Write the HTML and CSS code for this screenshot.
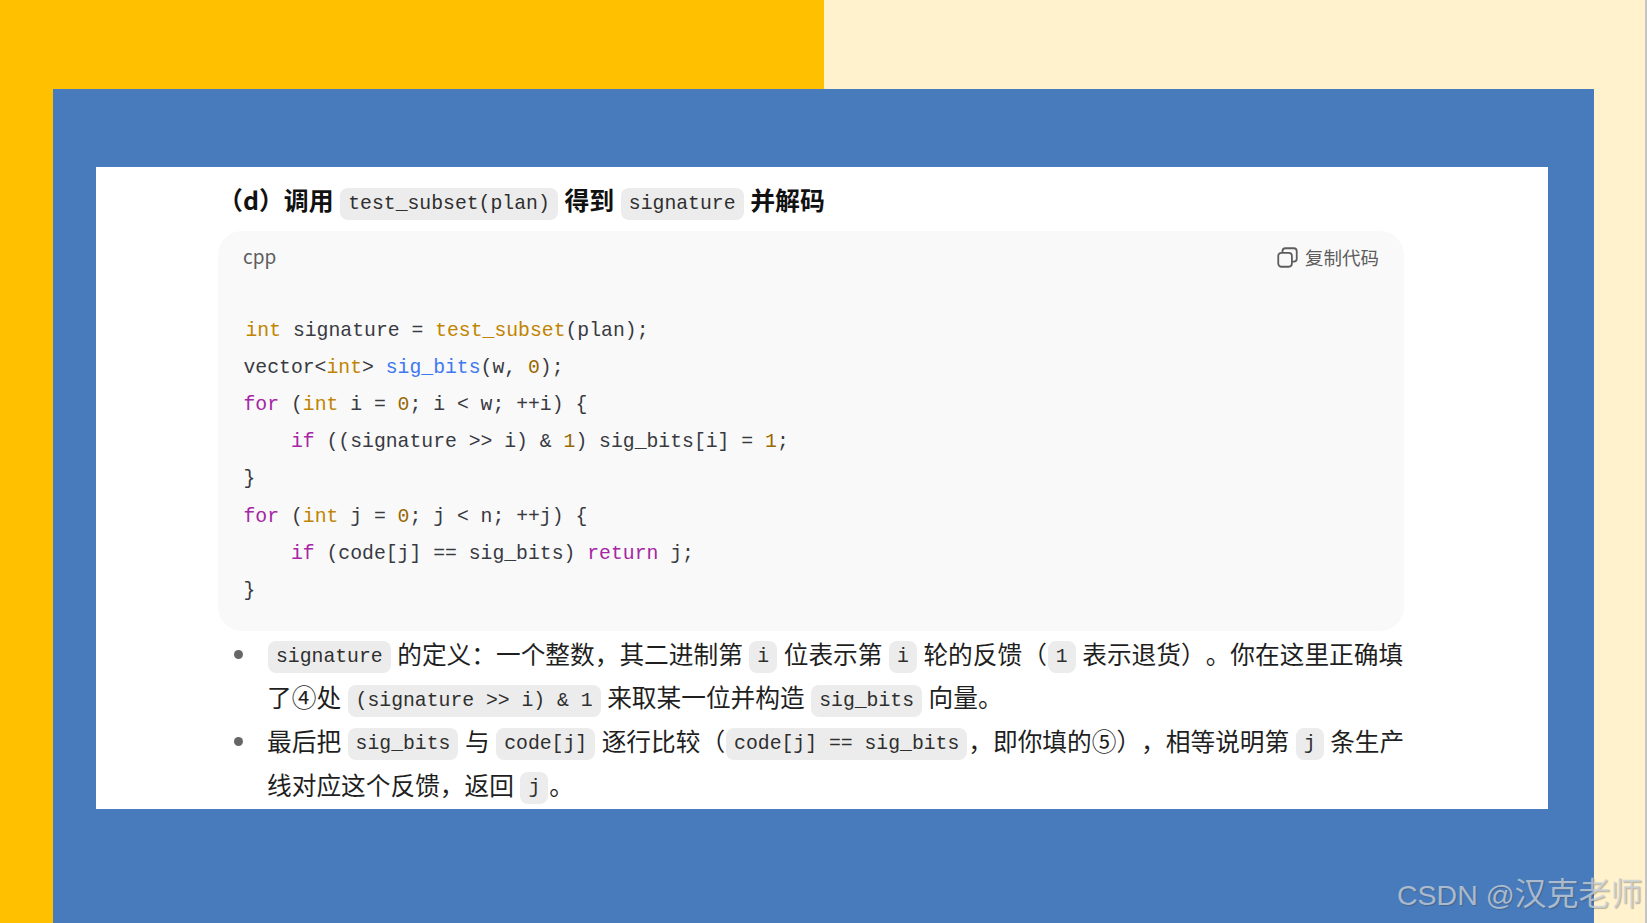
FILE: index.html
```html
<!DOCTYPE html>
<html lang="zh-CN">
<head>
<meta charset="utf-8">
<title>signature</title>
<link rel="stylesheet" href="styles.css">
</head>
<body>
<div class="slide">
  <div class="band">
    <div class="band-yellow"></div>
    <div class="band-cream"></div>
  </div>
  <div class="stage">
    <div class="side-yellow"></div>
    <div class="blue">
      <div class="panel">
        <h3 class="heading">（d）调用 <code>test_subset(plan)</code> 得到 <code>signature</code> 并解码</h3>
        <div class="block">
          <div class="block-head">
            <span class="lang">cpp</span>
            <span class="copy">
              <svg class="copy-icon" viewBox="0 0 20 20" width="21" height="21" fill="none" stroke="#5d5d5d" stroke-width="1.7"><rect x="1.2" y="5.5" width="13" height="13.3" rx="3"/><path d="M5.2 5.2V4A2.8 2.8 0 0 1 8 1.2H16A2.8 2.8 0 0 1 18.8 4V11.2A2.8 2.8 0 0 1 16 14H14.4"/></svg>
              复制代码
            </span>
          </div>
<pre class="src"><span class="nudge"><span class="ty">int</span></span> signature = <span class="ty">test_subset</span>(plan);
vector&lt;<span class="ty">int</span>&gt; <span class="fn">sig_bits</span>(w, <span class="num">0</span>);
<span class="kw">for</span> (<span class="ty">int</span> i = <span class="num">0</span>; i &lt; w; ++i) {
    <span class="kw">if</span> ((signature &gt;&gt; i) &amp; <span class="num">1</span>) sig_bits[i] = <span class="num">1</span>;
}
<span class="kw">for</span> (<span class="ty">int</span> j = <span class="num">0</span>; j &lt; n; ++j) {
    <span class="kw">if</span> (code[j] == sig_bits) <span class="kw">return</span> j;
}</pre>
        </div>
        <ul class="notes">
          <li><code>signature</code> 的定义：一个整数，其二进制第 <code>i</code> 位表示第 <code>i</code> 轮的反馈（<code>1</code> 表示退货）。你在这里正确填了④处 <code>(signature &gt;&gt; i) &amp; 1</code> 来取某一位并构造 <code>sig_bits</code> 向量。</li>
          <li>最后把 <code>sig_bits</code> 与 <code>code[j]</code> 逐行比较（<code>code[j] == sig_bits</code>，即你填的⑤），相等说明第 <code>j</code> 条生产线对应这个反馈，返回 <code>j</code>。</li>
        </ul>
      </div>
    </div>
    <div class="side-cream"></div>
  </div>
  <div class="watermark"><span class="wm-latin">CSDN @</span>汉克老师</div>
</div>
</body>
</html>
```

FILE: styles.css
```css
html, body {
  margin: 0;
  padding: 0;
}
body {
  width: 1647px;
  height: 923px;
  overflow: hidden;
  font-family: "Noto Sans CJK SC", "Noto Sans", sans-serif;
  text-spacing-trim: space-all;
}
.slide {
  position: relative;
  width: 1647px;
  height: 923px;
  display: flex;
  flex-direction: column;
  overflow: hidden;
  border-right: 2px solid #c4c4c4;
  box-sizing: border-box;
}
.band {
  display: flex;
  height: 89px;
  flex: none;
}
.band-yellow {
  width: 824px;
  background: #ffc000;
}
.band-cream {
  flex: 1;
  background: #fff2cc;
}
.stage {
  flex: 1;
  display: flex;
  min-height: 0;
}
.side-yellow {
  width: 53px;
  background: #ffc000;
}
.side-cream {
  flex: 1;
  background: #fff2cc;
}
.blue {
  width: 1541px;
  background: #487bbc;
  padding: 78px 46px 0 43px;
  box-sizing: border-box;
}
.panel {
  height: 642px;
  background: #fff;
  padding: 16px 144px 0 122px;
  box-sizing: border-box;
  overflow: hidden;
  color: #1a1a1a;
}
code {
  font-family: "Liberation Mono", monospace;
  font-size: 19.75px;
  font-weight: 400;
  line-height: 1;
  vertical-align: 1.5px;
  background: #ececec;
  border-radius: 8px;
  padding: 5px 8px;
  margin: 0 1px;
  color: #2f2f2f;
}
.heading {
  margin: 0 0 16px;
  height: 32px;
  font-size: 24.9px;
  font-weight: 700;
  line-height: 32px;
  color: #111;
}
.block {
  height: 400px;
  background: #f9f9f9;
  border-radius: 24px;
  padding: 0 25px 0 25px;
  box-sizing: border-box;
}
.block-head {
  height: 52px;
  display: flex;
  align-items: center;
  justify-content: space-between;
  color: #5d5d5d;
}
.lang {
  font-size: 19px;
  line-height: 22px;
  margin-bottom: 2px;
}
.copy {
  display: flex;
  align-items: center;
  gap: 7px;
  font-size: 18.5px;
}
.copy-icon {
  flex: none;
}
.src {
  margin: 29.5px 0 0 0.5px;
  font-family: "Liberation Mono", monospace;
  font-size: 19.75px;
  line-height: 37.2px;
  color: #383a42;
}
.nudge {
  padding-left: 2px;
}
.kw { color: #a626a4; }
.ty { color: #c18401; }
.fn { color: #4078f2; }
.num { color: #986801; }
.notes {
  margin: 0.5px -4px 0 0;
  padding: 0 0 0 49px;
  font-size: 24.7px;
  line-height: 43.7px;
  color: #1f1f1f;
  list-style: none;
}
.notes li {
  position: relative;
}
.notes li::before {
  content: "";
  position: absolute;
  left: -33px;
  top: 18px;
  width: 9px;
  height: 9px;
  border-radius: 50%;
  background: #666;
}
.watermark {
  position: absolute;
  left: 1397px;
  top: 873px;
  font-family: "Liberation Sans", "Noto Sans CJK SC", sans-serif;
  font-size: 32px;
  line-height: 42px;
  white-space: nowrap;
  color: rgba(205, 212, 220, 0.75);
  text-shadow: 1px 1px 1px rgba(60, 60, 60, 0.35);
}
.wm-latin {
  font-size: 28.5px;
}
```
